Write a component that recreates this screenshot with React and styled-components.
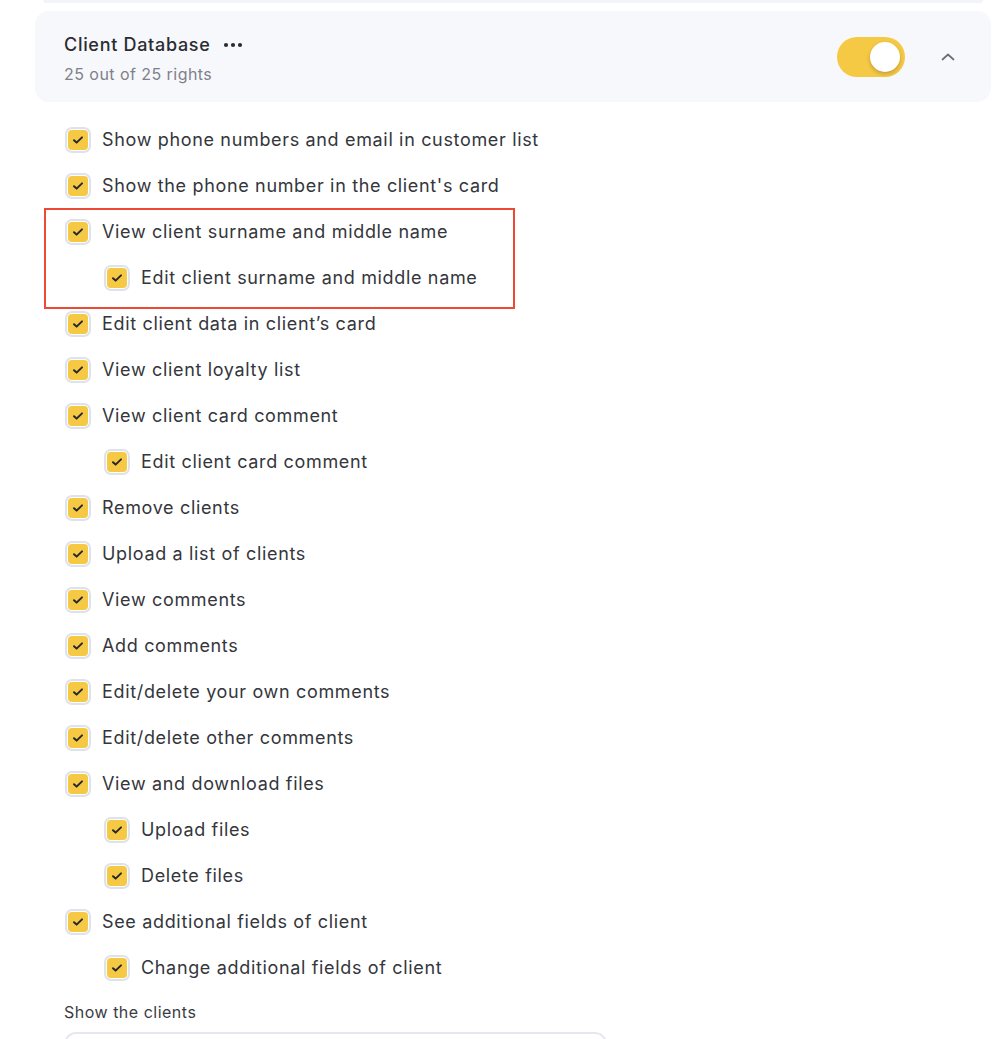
import React from "react";
import styled, { createGlobalStyle } from "styled-components";

const Global = createGlobalStyle`
  html, body { margin: 0; padding: 0; background: #ffffff; }
  body { font-family: Inter, "Noto Sans", "Liberation Sans", sans-serif; color: #34363c; -webkit-font-smoothing: antialiased; }
`;

const Page = styled.div`
  width: 1000px;
  height: 1039px;
  overflow: hidden;
  box-sizing: border-box;
  padding: 0 9px 0 35px;
`;

const PrevCard = styled.div`
  height: 3px;
  margin: 0 8px 0 8px;
  background: #f3f4f7;
  border-radius: 0 0 10px 10px;
`;

const Card = styled.div`
  margin-top: 8px;
  height: 91px;
  box-sizing: border-box;
  background: #f7f8fb;
  border-radius: 14px;
  display: flex;
  align-items: flex-start;
  padding: 22px 31px 0 29px;
`;

const TitleBlock = styled.div`
  flex: 1;
  display: flex;
  flex-direction: column;
  gap: 5px;
`;

const TitleRow = styled.div`
  display: flex;
  align-items: center;
  gap: 12px;
  font-size: 18px;
  line-height: 24px;
  font-weight: 500;
  letter-spacing: 0.7px;
  color: #2a2c31;
`;

const Subtitle = styled.div`
  font-size: 16px;
  line-height: 24px;
  letter-spacing: 0.45px;
  color: #7e818a;
`;

const Controls = styled.div`
  display: flex;
  align-items: center;
  gap: 31px;
  height: 47px;
`;

const Toggle = styled.div`
  width: 68px;
  height: 40px;
  border-radius: 20px;
  background: #f6c945;
  display: flex;
  align-items: center;
  justify-content: ${(p) => (p.$on ? "flex-end" : "flex-start")};
  padding: 0 5px;
  box-sizing: border-box;
`;

const Knob = styled.div`
  width: 30px;
  height: 30px;
  border-radius: 50%;
  background: #ffffff;
  box-shadow: 0 2px 4px rgba(0, 0, 0, 0.22);
`;

const IconBox = styled.div`
  width: 24px;
  height: 24px;
  display: flex;
  align-items: center;
  justify-content: center;
  color: #6b6e76;
`;

const List = styled.div`
  margin-top: 15px;
  display: flex;
  flex-direction: column;
`;

const Group = styled.div`
  position: relative;
  display: flex;
  flex-direction: column;
`;

const Highlight = styled.div`
  position: absolute;
  left: 9px;
  top: -1px;
  width: 471px;
  height: 101px;
  box-sizing: border-box;
  border: 2px solid #ec4a34;
  pointer-events: none;
`;

const Row = styled.label`
  display: flex;
  align-items: center;
  gap: 11px;
  height: 46px;
  padding-left: ${(p) => (p.$nested ? 69 : 30)}px;
  font-size: 18px;
  line-height: 24px;
  letter-spacing: 0.66px;
  color: #34363c;
`;

const Box = styled.span`
  width: 26px;
  height: 26px;
  box-sizing: border-box;
  border: 2px solid #e0e2ea;
  border-radius: 7px;
  padding: 1px;
  background: #ffffff;
  display: flex;
  flex-shrink: 0;
`;

const BoxFill = styled.span`
  flex: 1;
  border-radius: 4px;
  background: #f6c945;
  display: flex;
  align-items: center;
  justify-content: center;
  color: #25272c;
`;

const FieldLabel = styled.div`
  margin-top: 11px;
  padding-left: 29px;
  font-size: 16px;
  line-height: 20px;
  letter-spacing: 0.5px;
  color: #3a3c42;
`;

const Input = styled.div`
  margin: 10px 0 0 29px;
  width: 543px;
  height: 48px;
  box-sizing: border-box;
  border: 2px solid #e6e8f0;
  border-radius: 12px;
`;

const Check = () => (
  <svg width="12" height="10" viewBox="0 0 12 10" fill="none">
    <path d="M2 5.2 L4.6 7.6 L10 2.4" stroke="currentColor" strokeWidth="2" strokeLinecap="round" strokeLinejoin="round" />
  </svg>
);

const Checkbox = () => (
  <Box>
    <BoxFill>
      <Check />
    </BoxFill>
  </Box>
);

const Item = ({ nested, children }) => (
  <Row $nested={nested}>
    <Checkbox />
    <span>{children}</span>
  </Row>
);

const Dots = () => (
  <svg width="20" height="6" viewBox="0 0 20 6">
    <circle cx="3" cy="3" r="2.1" fill="#2a2c31" />
    <circle cx="10" cy="3" r="2.1" fill="#2a2c31" />
    <circle cx="17" cy="3" r="2.1" fill="#2a2c31" />
  </svg>
);

const Chevron = () => (
  <svg width="14" height="8" viewBox="0 0 14 8" fill="none">
    <path d="M1.5 6.5 L7 1.5 L12.5 6.5" stroke="currentColor" strokeWidth="1.7" strokeLinecap="round" strokeLinejoin="round" />
  </svg>
);

const before = [
  "Show phone numbers and email in customer list",
  "Show the phone number in the client's card",
];

const after = [
  ["Edit client data in client’s card"],
  ["View client loyalty list"],
  ["View client card comment"],
  ["Edit client card comment", true],
  ["Remove clients"],
  ["Upload a list of clients"],
  ["View comments"],
  ["Add comments"],
  ["Edit/delete your own comments"],
  ["Edit/delete other comments"],
  ["View and download files"],
  ["Upload files", true],
  ["Delete files", true],
  ["See additional fields of client"],
  ["Change additional fields of client", true],
];

export default function App() {
  return (
    <Page>
      <Global />
      <PrevCard />
      <Card>
        <TitleBlock>
          <TitleRow>
            Client Database
            <Dots />
          </TitleRow>
          <Subtitle>25 out of 25 rights</Subtitle>
        </TitleBlock>
        <Controls>
          <Toggle $on>
            <Knob />
          </Toggle>
          <IconBox>
            <Chevron />
          </IconBox>
        </Controls>
      </Card>
      <List>
        {before.map((t) => (
          <Item key={t}>{t}</Item>
        ))}
        <Group>
          <Item>View client surname and middle name</Item>
          <Item nested>Edit client surname and middle name</Item>
          <Highlight />
        </Group>
        {after.map(([t, n]) => (
          <Item key={t} nested={n}>
            {t}
          </Item>
        ))}
      </List>
      <FieldLabel>Show the clients</FieldLabel>
      <Input />
    </Page>
  );
}
